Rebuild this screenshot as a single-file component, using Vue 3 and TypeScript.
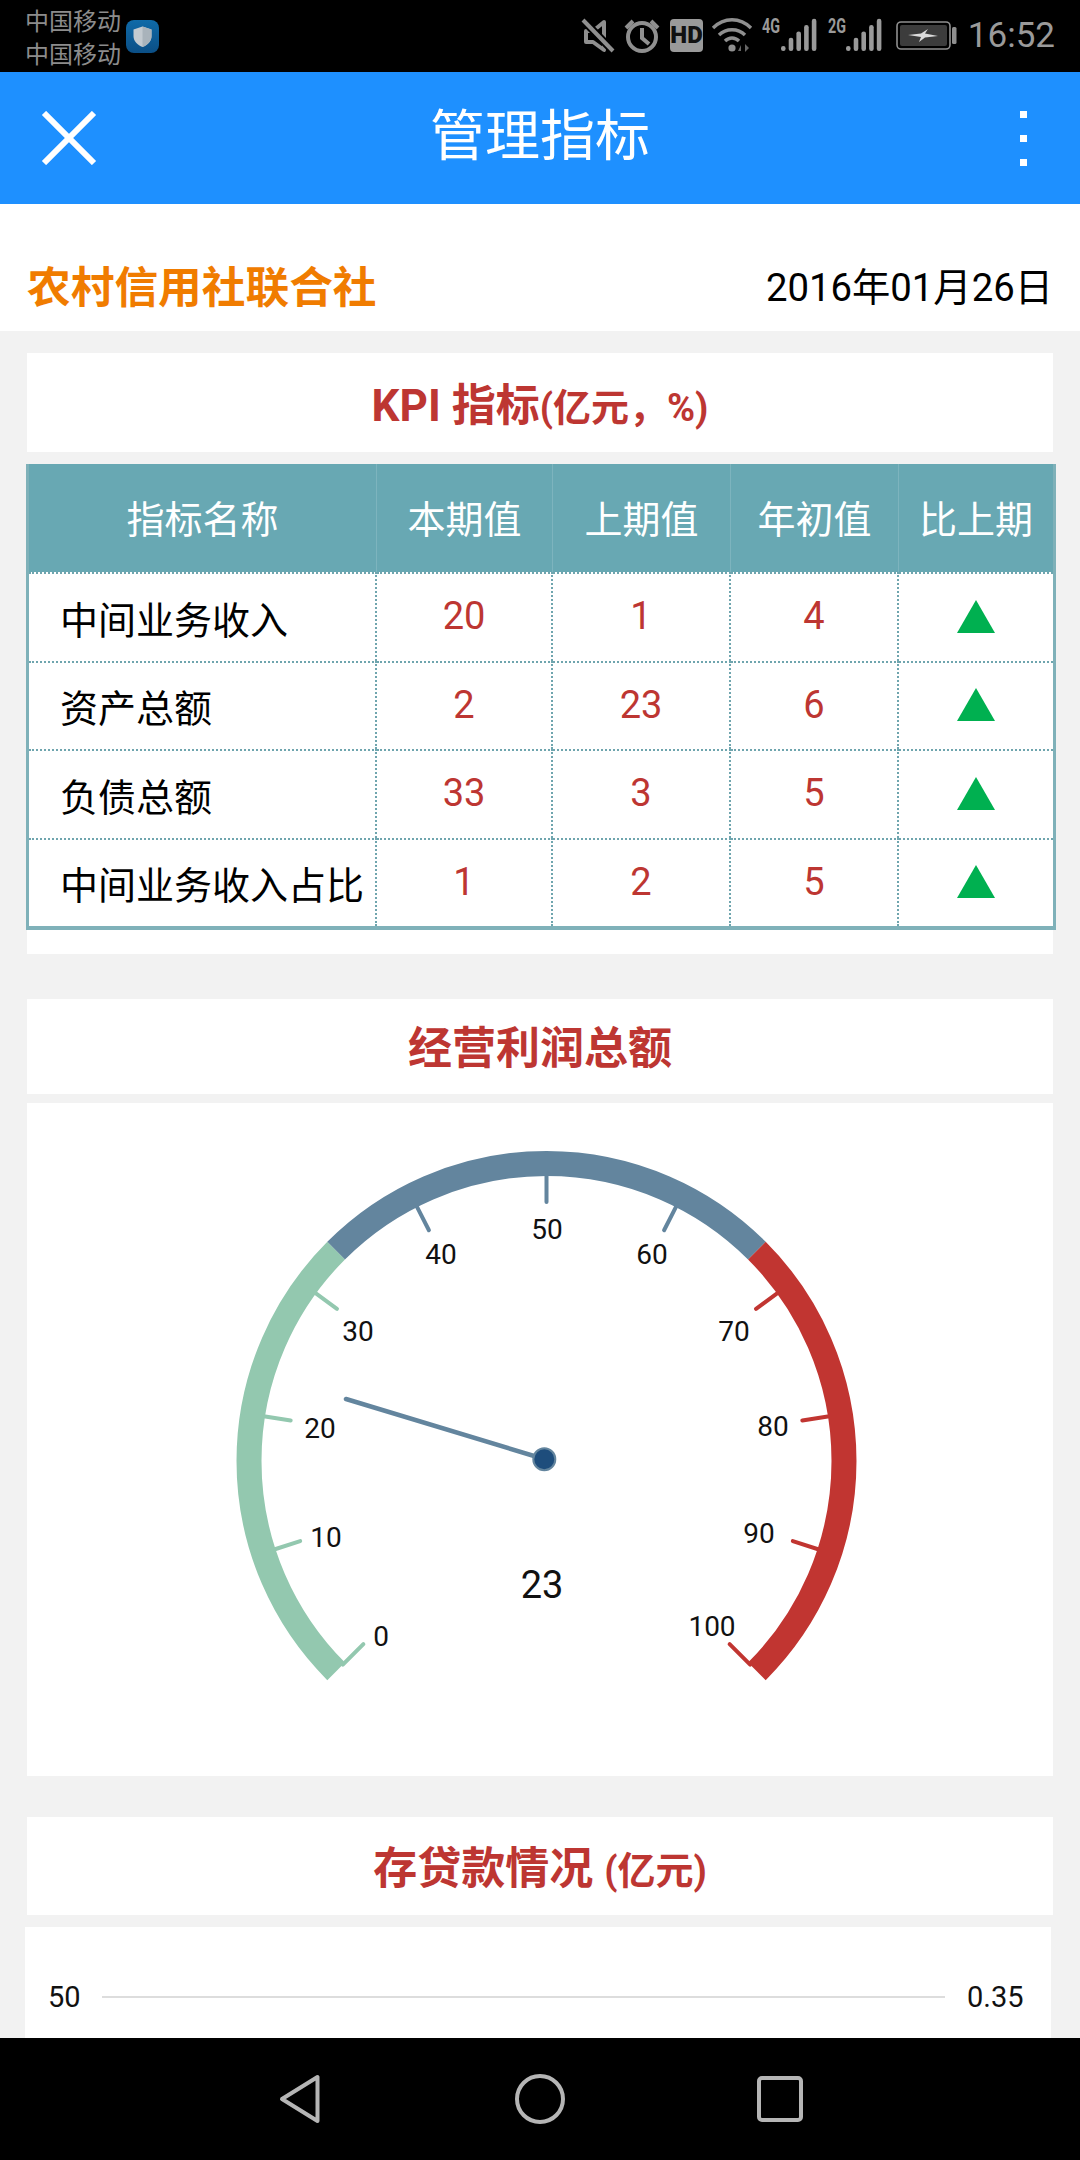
<script setup lang="ts">
interface Row { name: string; cur: number; prev: number; start: number }
const rows: Row[] = [
  { name: '中间业务收入', cur: 20, prev: 1, start: 4 },
  { name: '资产总额', cur: 2, prev: 23, start: 6 },
  { name: '负债总额', cur: 33, prev: 3, start: 5 },
  { name: '中间业务收入占比', cur: 1, prev: 2, start: 5 },
]
const heads = ['指标名称', '本期值', '上期值', '年初值', '比上期']

const cx = 546.5
const cy = 1461
const GREEN = '#93c8af'
const BLUE = '#63859e'
const RED = '#c13531'

function polar(r: number, deg: number): [number, number] {
  const a = (deg * Math.PI) / 180
  return [cx + r * Math.sin(a), cy - r * Math.cos(a)]
}
function arc(r: number, from: number, to: number): string {
  const [x1, y1] = polar(r, from)
  const [x2, y2] = polar(r, to)
  return `M${x1.toFixed(2)} ${y1.toFixed(2)}A${r} ${r} 0 0 1 ${x2.toFixed(2)} ${y2.toFixed(2)}`
}
const bands = [
  { d: arc(297.5, -135, -45), c: GREEN },
  { d: arc(297.5, -45, 45), c: BLUE },
  { d: arc(297.5, 45, 135), c: RED },
]
const labelPos: [number, number][] = [
  [381, 1636], [326, 1537], [320, 1428], [358, 1331], [441, 1254], [547, 1229],
  [652, 1254], [734, 1331], [773, 1426], [759, 1533], [712, 1626],
]
const ticks = labelPos.map((p, i) => {
  const deg = -135 + i * 27
  const [x1, y1] = polar(259, deg)
  const [x2, y2] = polar(288, deg)
  const c = i <= 3 ? GREEN : i <= 6 ? BLUE : RED
  return { x1, y1, x2, y2, c, label: String(i * 10), lx: p[0], ly: p[1] + 10 }
})
const signalBars = [0, 1, 2, 3, 4]
</script>

<template>
  <div class="phone">
    <div class="statusbar">
      <div class="carrier">
        <div class="carrier-lines">
          <span>中国移动</span>
          <span>中国移动</span>
        </div>
        <svg class="shield" width="33" height="33" viewBox="0 0 33 33">
          <defs>
            <linearGradient id="sg" x1="0" y1="0" x2="0" y2="1">
              <stop offset="0" stop-color="#0f6aa8" />
              <stop offset="1" stop-color="#0b4f86" />
            </linearGradient>
          </defs>
          <rect width="33" height="33" rx="8" fill="url(#sg)" />
          <path d="M16.5 6.5L25.5 9.5V16C25.5 21.5 21.5 25 16.5 27C11.5 25 7.5 21.5 7.5 16V9.5Z" fill="#c3cad0" />
          <path d="M16.5 6.5L25.5 9.5V16C25.5 21.5 21.5 25 16.5 27Z" fill="#a9b3bb" />
        </svg>
      </div>
      <div class="status-right">
        <svg class="status-icons" width="376" height="72" viewBox="581 1 376 72">
          <g fill="none" stroke="#8f8f8f" stroke-width="4">
            <path d="M604 23L593 32H586V43H593L604 51Z" stroke-linejoin="round" />
            <path d="M582 20L614 53" stroke="#000" stroke-width="8" />
            <path d="M583 21L613 52" />
          </g>
          <g fill="none" stroke="#8f8f8f" stroke-width="4">
            <circle cx="642" cy="38" r="14" />
            <path d="M642 29V39L649 45" />
            <path d="M626 29L633 22M651 22L658 29" />
          </g>
          <rect x="670" y="20" width="33" height="33" rx="4" fill="#9a9a9a" />
          <text x="686.5" y="44" class="hd">HD</text>
          <g fill="none" stroke="#8f8f8f" stroke-width="3.4">
            <path d="M713 29C724 18 740 18 751 29" />
            <path d="M719 36C726 29 738 29 745 36" />
            <path d="M725 42C729 38 735 38 739 42" />
          </g>
          <circle cx="732" cy="49" r="3.6" fill="#8f8f8f" />
          <path d="M741 46L738 52H741ZM745 45V53L749 49Z" fill="#666" />
          <text x="762" y="33.5" class="net" textLength="18" lengthAdjust="spacingAndGlyphs">4G</text>
          <rect v-for="i in signalBars" :key="'a' + i" :x="781 + i * 7.7" :y="i === 0 ? 47 : 45 - i * 6.3" width="4.6" :height="i === 0 ? 5 : 7 + i * 6.3" rx="2.2" fill="#9a9a9a" />
          <text x="828" y="33.5" class="net" textLength="18" lengthAdjust="spacingAndGlyphs">2G</text>
          <rect v-for="i in signalBars" :key="'b' + i" :x="846 + i * 7.7" :y="i === 0 ? 47 : 45 - i * 6.3" width="4.6" :height="i === 0 ? 5 : 7 + i * 6.3" rx="2.2" fill="#9a9a9a" />
          <rect x="897" y="23" width="53" height="27" rx="4" fill="#000" stroke="#8f8f8f" stroke-width="1.6" />
          <rect x="900" y="26" width="47" height="21" rx="2" fill="#3c3c3c" />
          <rect x="952" y="28" width="4.5" height="17" rx="1.5" fill="#8f8f8f" />
          <path d="M908 36L921 34.5L928 30L925 34.5L938 37L925 38.5L919 43L921 38Z" fill="#dcdcdc" />
        </svg>
        <span class="time">16:52</span>
      </div>
    </div>

    <header class="appbar">
      <div class="bar-slot left">
        <svg width="56" height="54" viewBox="0 0 56 54">
          <path d="M3 2L53 52M53 2L3 52" fill="none" stroke="#fff" stroke-width="6" />
        </svg>
      </div>
      <h1 class="bar-title">管理指标</h1>
      <div class="bar-slot right">
        <i class="dot"></i><i class="dot"></i><i class="dot"></i>
      </div>
    </header>

    <main class="content">
      <div class="org-row">
        <span class="org">农村信用社联合社</span>
        <span class="date">2016年01月26日</span>
      </div>

      <div class="title-card first">
        <span class="t-big">KPI 指标</span><span class="t-small">(亿元，%)</span>
      </div>

      <section class="table-card">
        <div class="kpi-table">
          <div class="tr head">
            <div v-for="h in heads" :key="h" class="th">{{ h }}</div>
          </div>
          <div v-for="r in rows" :key="r.name" class="tr">
            <div class="td name">{{ r.name }}</div>
            <div class="td val">{{ r.cur }}</div>
            <div class="td val">{{ r.prev }}</div>
            <div class="td val">{{ r.start }}</div>
            <div class="td val"><i class="up"></i></div>
          </div>
        </div>
      </section>

      <div class="title-card second"><span class="t-big">经营利润总额</span></div>

      <section class="gauge-card">
        <svg class="gauge" width="1026" height="673" viewBox="27 1103 1026 673">
          <line v-for="t in ticks" :key="'t' + t.label" :x1="t.x1" :y1="t.y1" :x2="t.x2" :y2="t.y2" :stroke="t.c" stroke-width="4" stroke-linecap="round" />
          <path v-for="b in bands" :key="b.c" :d="b.d" fill="none" :stroke="b.c" stroke-width="25" />
          <text v-for="t in ticks" :key="'l' + t.label" :x="t.lx" :y="t.ly" class="g-label">{{ t.label }}</text>
          <line x1="544" y1="1459" x2="346" y2="1399" stroke="#63859e" stroke-width="4.5" stroke-linecap="round" />
          <circle cx="544.3" cy="1459.3" r="11" fill="#1e4d7c" stroke="#63859e" stroke-width="2" />
          <text x="542" y="1598" class="g-value">23</text>
        </svg>
      </section>

      <div class="title-card third">
        <span class="t-big">存贷款情况 </span><span class="t-small">(亿元)</span>
      </div>

      <section class="chart-card">
        <div class="axis-row">
          <span class="axis-l">50</span>
          <span class="axis-line"></span>
          <span class="axis-r">0.35</span>
        </div>
      </section>
    </main>

    <nav class="navbar">
      <svg width="42" height="50" viewBox="0 0 42 50">
        <path d="M38.5 3V47L3 25Z" fill="none" stroke="#b5b5b5" stroke-width="4" stroke-linejoin="round" />
      </svg>
      <svg width="50" height="50" viewBox="0 0 50 50">
        <circle cx="25" cy="25" r="23" fill="none" stroke="#b5b5b5" stroke-width="4" />
      </svg>
      <svg width="46" height="46" viewBox="0 0 46 46">
        <rect x="2" y="2" width="42" height="42" rx="3" fill="none" stroke="#b5b5b5" stroke-width="4" />
      </svg>
    </nav>
  </div>
</template>

<style scoped>
.phone {
  width: 1080px;
  height: 2160px;
  display: flex;
  flex-direction: column;
  overflow: hidden;
  background: #f2f2f2;
  font-family: Roboto, "Noto Sans CJK SC", sans-serif;
}
.statusbar {
  height: 72px;
  flex: none;
  background: #000;
  display: flex;
  justify-content: space-between;
  align-items: center;
  padding: 0 25px 0 25px;
  color: #8c8c8c;
}
.carrier { display: flex; align-items: center; gap: 8px; }
.carrier-lines {
  display: flex;
  flex-direction: column;
  font-size: 24px;
  line-height: 33px;
  width: 93px;
  padding-top: 6px;
  white-space: nowrap;
}
.shield { flex: none; margin-top: 1px; }
.status-right { display: flex; align-items: center; gap: 11px; }
.status-icons { display: block; }
.hd {
  font-size: 24px;
  font-weight: 900;
  text-anchor: middle;
  fill: #111;
  font-family: Roboto, sans-serif;
}
.net {
  font-size: 20px;
  font-weight: 700;
  fill: #9a9a9a;
  font-family: Roboto, sans-serif;
}
.time { font-size: 35px; color: #9a9a9a; line-height: 40px; }

.appbar {
  height: 132px;
  flex: none;
  background: #1e90ff;
  display: flex;
  align-items: center;
}
.bar-slot { width: 130px; flex: none; display: flex; }
.bar-slot.left { padding-left: 41px; box-sizing: border-box; }
.bar-slot.right {
  flex-direction: column;
  align-items: flex-end;
  gap: 17px;
  padding-right: 53px;
  box-sizing: border-box;
}
.bar-slot svg { display: block; }
.dot { display: block; width: 7px; height: 7px; background: #fff; }
.bar-title {
  flex: 1;
  margin: 0 0 5px;
  text-align: center;
  font-size: 55px;
  font-weight: 400;
  color: #fff;
  line-height: 64px;
}

.content { flex: 1; min-height: 0; overflow: hidden; }
.org-row {
  height: 127px;
  background: #fff;
  display: flex;
  justify-content: space-between;
  align-items: flex-end;
  padding: 0 27px 13px 27px;
  box-sizing: border-box;
}
.org { font-size: 43.7px; font-weight: 700; color: #f07c00; line-height: 60px; }
.date { font-size: 38.3px; color: #000; line-height: 60px; }

.title-card {
  margin: 0 27px;
  background: #fff;
  display: flex;
  justify-content: center;
  align-items: baseline;
  color: #bd3632;
  font-weight: 700;
  white-space: pre;
  box-sizing: border-box;
}
.t-big { font-size: 44px; line-height: 60px; }
.t-small { font-size: 38px; line-height: 60px; }
.title-card.first { margin-top: 22px; height: 99px; padding-top: 23px; }
.title-card.second { margin-top: 45px; height: 95px; padding-top: 20px; }
.title-card.third { margin-top: 41px; height: 98px; padding-top: 22px; }

.table-card {
  margin: 12px 27px 0 27px;
  height: 490px;
  background: #fff;
}
.kpi-table {
  margin: 0 -3px 0 -1px;
  border: solid #7fb1b9;
  border-width: 0 3px 4px;
  box-sizing: border-box;
}
.tr {
  display: grid;
  grid-template-columns: 348px 176px 178px 168px 1fr;
  height: 88.5px;
}
.tr.head { height: 108px; background: #68a8b3; }
.th {
  display: flex;
  align-items: center;
  justify-content: center;
  padding-bottom: 4px;
  color: #fff;
  font-size: 38px;
  border-right: 1px solid #7db4be;
}
.th:last-child { border-right: 0; }
.td {
  display: flex;
  align-items: center;
  border-top: 2px dotted #6fa5ae;
  border-right: 2px dotted #6fa5ae;
  box-sizing: border-box;
  font-size: 38px;
}
.td:last-child { border-right: 0; }
.name { padding-left: 31px; color: #000; white-space: nowrap; }
.val { justify-content: center; color: #bd3632; padding-bottom: 2px; }
.up {
  width: 0;
  height: 0;
  border-left: 19px solid transparent;
  border-right: 19px solid transparent;
  border-bottom: 33px solid #00b050;
}

.gauge-card {
  margin: 9px 27px 0;
  height: 673px;
  background: #fff;
}
.gauge { display: block; }
.g-label { font-size: 28px; text-anchor: middle; fill: #111; }
.g-value { font-size: 38px; text-anchor: middle; fill: #111; }

.chart-card {
  margin: 12px 29px 0 25px;
  height: 300px;
  background: #fff;
  padding-top: 48px;
  box-sizing: border-box;
}
.axis-row {
  display: flex;
  align-items: center;
  height: 44px;
  font-size: 29px;
  color: #111;
}
.axis-l { width: 77px; padding-left: 23px; box-sizing: border-box; }
.axis-line { flex: 1; height: 2px; background: #ddd; }
.axis-r { width: 106px; padding-left: 22px; box-sizing: border-box; white-space: nowrap; }

.navbar {
  height: 122px;
  flex: none;
  background: #000;
  display: grid;
  grid-template-columns: 240px 240px 240px;
  justify-content: center;
  justify-items: center;
  align-items: center;
}
.navbar svg { display: block; }
</style>
